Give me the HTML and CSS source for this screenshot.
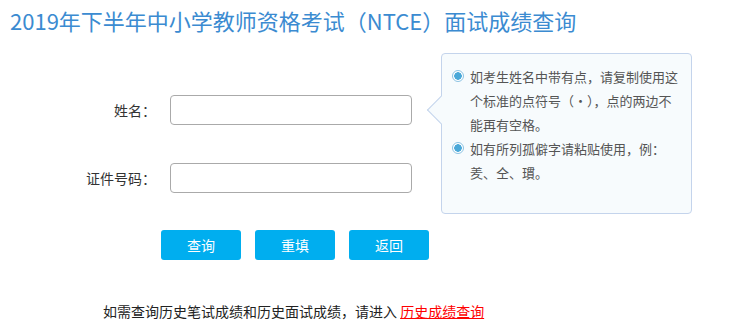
FILE: index.html
```html
<!DOCTYPE html>
<html lang="zh-CN">
  <head>
    <meta charset="UTF-8" />
    <meta name="viewport" content="width=device-width, initial-scale=1.0" />
    <title>NTCE面试成绩查询</title>
    <link rel="stylesheet" href="styles.css">
  </head>
  <body>
    <h1 class="title">2019年下半年中小学教师资格考试（NTCE）面试成绩查询</h1>
    <div class="main">
      <form class="query-form">
        <div class="form-row">
          <label class="form-label" for="name">姓名：</label>
          <input class="form-input" id="name" type="text" />
        </div>
        <div class="form-row">
          <label class="form-label" for="idno">证件号码：</label>
          <input class="form-input" id="idno" type="text" />
        </div>
        <div class="form-buttons">
          <button type="button" class="button">查询</button>
          <button type="reset" class="button">重填</button>
          <button type="button" class="button">返回</button>
        </div>
      </form>
      <div class="tip">
        <span class="tip-arrow"></span>
        <p class="tip-item">如考生姓名中带有点，请复制使用这个标准的点符号（·），点的两边不能再有空格。</p>
        <p class="tip-item">如有所列孤僻字请粘贴使用，例：<br />羑、仝、瑻。</p>
      </div>
    </div>
    <p class="history">
      如需查询历史笔试成绩和历史面试成绩，请进入
      <a href="#" class="history-link">历史成绩查询</a>
    </p>
  </body>
</html>
```

FILE: styles.css
```css
body {
  margin: 0;
  font-family: "Noto Sans CJK SC", "Noto Sans", sans-serif;
  color: #333;
  background-color: #fff;
}
.title {
  margin: 0;
  padding: 5px 0 0 10px;
  font-size: 22px;
  font-weight: normal;
  line-height: 30px;
  color: #3b8bd1;
}
.main {
  display: flex;
  align-items: flex-start;
  margin-top: 18px;
}
.query-form {
  flex-shrink: 0;
  width: 430px;
  padding-top: 42px;
}
.form-row {
  display: flex;
  align-items: center;
  height: 30px;
  margin-bottom: 38px;
}
.form-row:nth-child(2) {
  margin-bottom: 37px;
}
.form-label {
  flex-shrink: 0;
  width: 170px;
  padding-right: 14px;
  box-sizing: border-box;
  text-align: right;
  font-size: 14px;
  color: #333;
}
.form-input {
  flex-shrink: 0;
  width: 242px;
  height: 30px;
  box-sizing: border-box;
  border: 1px solid #aaa;
  border-radius: 4px;
  padding: 0 6px;
  font-size: 14px;
  outline: none;
}
.form-buttons {
  display: flex;
  gap: 14px;
  padding-left: 161px;
}
.button {
  flex-shrink: 0;
  width: 80px;
  height: 30px;
  border: none;
  border-radius: 3px;
  background-color: #00aeef;
  color: #fff;
  font-family: inherit;
  font-size: 14px;
  cursor: pointer;
}
.tip {
  position: relative;
  flex-shrink: 0;
  margin-left: 11px;
  width: 251px;
  height: 161px;
  box-sizing: border-box;
  padding: 11px 11px 0 28px;
  border: 1px solid #c4d4ec;
  border-radius: 4px;
  background-color: #f7fbfd;
  font-size: 13px;
  line-height: 24px;
  color: #555;
}
.tip-arrow {
  position: absolute;
  left: -11px;
  top: 46px;
  width: 19px;
  height: 19px;
  background-color: #f7fbfd;
  border-left: 1px solid #c4d4ec;
  border-bottom: 1px solid #c4d4ec;
  transform: rotate(45deg);
}
.tip-item {
  position: relative;
  margin: 0;
}
.tip-item::before {
  content: "";
  position: absolute;
  left: -18px;
  top: 5px;
  width: 12px;
  height: 12px;
  box-sizing: border-box;
  border: 1px solid #8cc3e3;
  border-radius: 50%;
  background: radial-gradient(circle, #4aa8d8 0, #4aa8d8 3.5px, #fff 4px);
}
.history {
  margin: 41px 0 0 103px;
  font-size: 14px;
  line-height: 20px;
  color: #222;
}
.history-link {
  color: #f00;
  text-decoration: underline;
}
```
